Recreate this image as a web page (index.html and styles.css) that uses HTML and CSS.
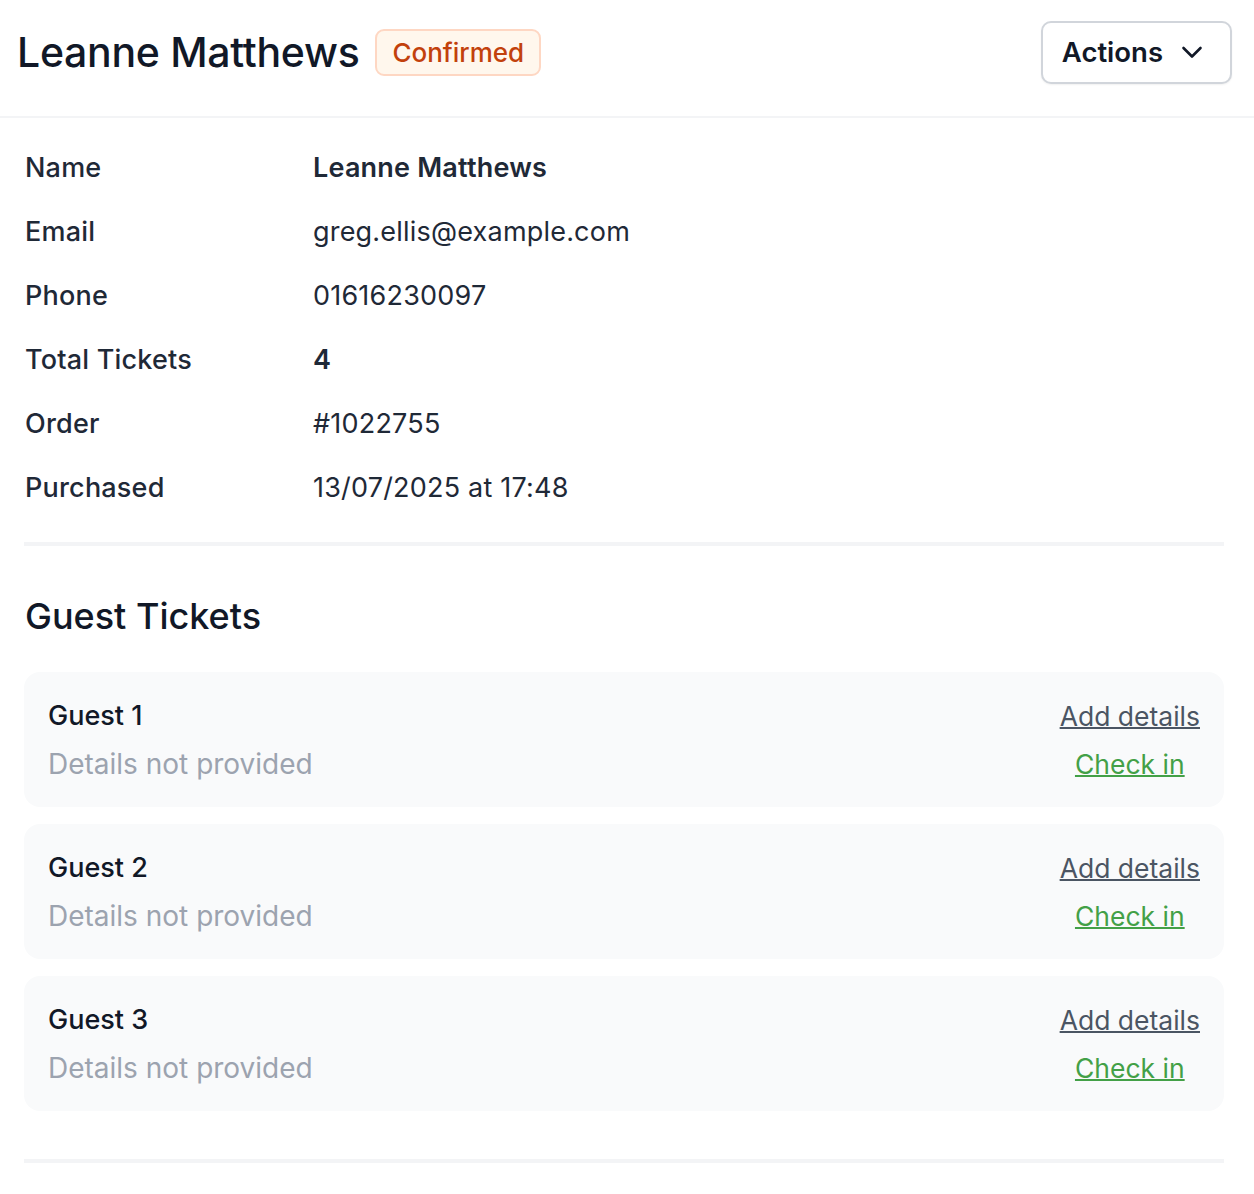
FILE: index.html
```html
<!DOCTYPE html>
<html lang="en">
<head>
    <meta charset="UTF-8">
    <title>Leanne Matthews</title>
    <link rel="stylesheet" href="styles.css">
</head>
<body>
    <header class="page-header">
        <div class="title-wrap">
            <h1>Leanne Matthews</h1>
            <span class="badge">Confirmed</span>
        </div>
        <button class="actions-btn">
            Actions
            <svg width="24" height="24" viewBox="0 0 24 24" fill="none" stroke="currentColor" stroke-width="2.6" stroke-linecap="round" stroke-linejoin="round"><path d="M3.5 8l8.5 8.5 8.5-8.5"/></svg>
        </button>
    </header>

    <main class="content">
        <dl class="details">
            <dt>Name</dt><dd class="strong">Leanne Matthews</dd>
            <dt>Email</dt><dd>greg.ellis@example.com</dd>
            <dt>Phone</dt><dd>01616230097</dd>
            <dt>Total Tickets</dt><dd class="strong">4</dd>
            <dt>Order</dt><dd>#1022755</dd>
            <dt>Purchased</dt><dd>13/07/2025 at 17:48</dd>
        </dl>

        <section class="guests">
            <h2>Guest Tickets</h2>
            <div class="guest-card">
                <div>
                    <div class="guest-name">Guest 1</div>
                    <div class="guest-meta">Details not provided</div>
                </div>
                <div class="guest-links">
                    <a href="#" class="link-details">Add details</a>
                    <a href="#" class="link-checkin">Check in</a>
                </div>
            </div>
            <div class="guest-card">
                <div>
                    <div class="guest-name">Guest 2</div>
                    <div class="guest-meta">Details not provided</div>
                </div>
                <div class="guest-links">
                    <a href="#" class="link-details">Add details</a>
                    <a href="#" class="link-checkin">Check in</a>
                </div>
            </div>
            <div class="guest-card">
                <div>
                    <div class="guest-name">Guest 3</div>
                    <div class="guest-meta">Details not provided</div>
                </div>
                <div class="guest-links">
                    <a href="#" class="link-details">Add details</a>
                    <a href="#" class="link-checkin">Check in</a>
                </div>
            </div>
        </section>
    </main>
</body>
</html>
```

FILE: styles.css
```css
body {
    margin: 0;
    font-family: Inter, "Noto Sans", sans-serif;
    color: #111827;
    background: #fff;
}
.page-header {
    display: flex;
    justify-content: space-between;
    align-items: center;
    height: 118px;
    padding: 0 22px 12px 17px;
    border-bottom: 2px solid #f3f4f6;
    box-sizing: border-box;
}
.title-wrap {
    display: flex;
    align-items: center;
    gap: 16px;
}
h1 {
    margin: 0;
    font-size: 41px;
    font-weight: 500;
    letter-spacing: -0.3px;
}
.badge {
    padding: 6px 15px;
    font-size: 26px;
    font-weight: 500;
    color: #c2410c;
    background: #fff7ed;
    border: 2px solid #fed7c3;
    border-radius: 9px;
}
.actions-btn {
    display: flex;
    align-items: center;
    gap: 17px;
    height: 63px;
    padding: 0 26px 0 19px;
    font-family: inherit;
    font-size: 27.5px;
    font-weight: 600;
    color: #111827;
    background: #fff;
    border: 2px solid #d1d5db;
    border-radius: 10px;
    box-shadow: 0 1px 2px rgba(0,0,0,0.06);
}
.content {
    padding: 0 30px 0 24px;
}
.details {
    display: grid;
    grid-template-columns: 288px 1fr;
    margin: 0;
    padding: 18px 0 22px 1px;
    border-bottom: 4px solid #f3f4f6;
    font-size: 27px;
    letter-spacing: 0.2px;
}
.details dt, .details dd {
    margin: 0;
    line-height: 64px;
    color: #1f2937;
}
.details dt { font-weight: 500; }
.details dd.strong { font-weight: 600; }
.guests {
    padding: 50px 0 48px;
    border-bottom: 4px solid #f3f4f6;
}
.guests h2 {
    margin: 0 0 36px 1px;
    font-size: 36px;
    font-weight: 500;
    line-height: 40px;
}
.guest-card {
    display: flex;
    justify-content: space-between;
    align-items: center;
    height: 135px;
    padding: 0 24px;
    margin-bottom: 17px;
    background: #f9fafb;
    border-radius: 16px;
    box-sizing: border-box;
}
.guest-card:last-child { margin-bottom: 0; }
.guest-name {
    font-size: 27px;
    font-weight: 500;
    line-height: 40px;
}
.guest-meta {
    margin-top: 8px;
    font-size: 28px;
    color: #9ca3af;
    line-height: 40px;
}
.guest-links {
    display: flex;
    flex-direction: column;
    align-items: center;
    gap: 16px;
    font-size: 26.5px;
    line-height: 32px;
}
.link-details { color: #4b5563; text-decoration-thickness: 2px; }
.link-checkin { color: #43a047; text-decoration-thickness: 2px; }
```
